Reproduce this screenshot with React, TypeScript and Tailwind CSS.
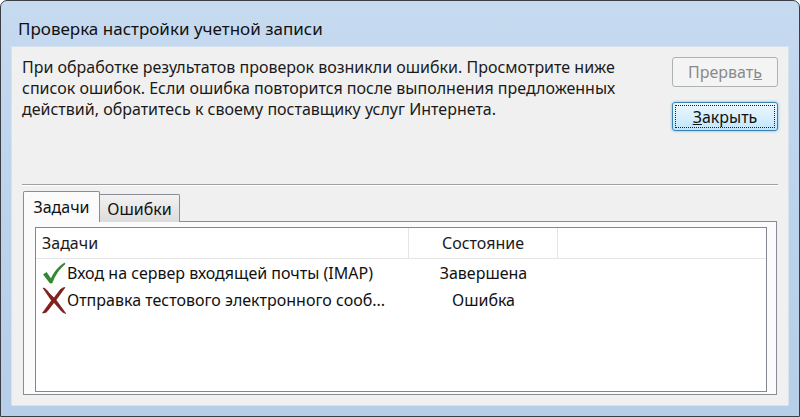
import React from 'react';

const font = { fontFamily: '"Noto Sans", "Open Sans", sans-serif' };

function CheckIcon() {
  return (
    <svg width="24" height="22" viewBox="0 0 24 22" className="shrink-0">
      <path d="M1.5 12.5 L4.5 10.5 L9 17 C12 10 16.5 4.5 22.5 1 L23 2 C17 7 13 13 10 21 L8 21 Z" fill="#2e8b2e" stroke="#1d6b1d" strokeWidth="0.6" />
    </svg>
  );
}

function CrossIcon() {
  return (
    <svg width="26" height="28" viewBox="0 0 26 28" className="shrink-0">
      <path d="M2 2 C4 2 6 4 8 7 L13 12 L19 4 C20.5 2.5 22 1.5 24 1.5 L15 14 L23 25 C23.5 26 24 27 25 27.5 C22.5 27 21 26 19.5 24 L13 16.5 L6 25.5 C5 26.5 3 27 1.5 27 L10.5 14.5 Z" fill="#8b1c1c" stroke="#5e0f0f" strokeWidth="0.6" />
    </svg>
  );
}

export default function App() {
  return (
    <div className="w-[800px] h-[417px] bg-white overflow-hidden" style={font}>
      <div className="w-full h-full flex flex-col rounded-t-[7px] border border-[#3b3f45] bg-gradient-to-b from-[#c6daf0] via-[#bcd3ec] to-[#b6cee8]">
        <div className="h-[45px] shrink-0 flex items-end pb-[5px] pl-[17px] text-[17px] text-[#111]">
          Проверка настройки учетной записи
        </div>
        <div className="mx-[10px] flex-1 border border-[#d6e2ee] bg-[#f0f0f0] flex flex-col">
          <div className="flex pl-[10px] pr-[10px] pt-[10px]">
            <p className="flex-1 text-[16px] leading-[21px] text-[#1a1a1a]">
              При обработке результатов проверок возникли ошибки. Просмотрите ниже список ошибок. Если ошибка повторится после выполнения предложенных действий, обратитесь к своему поставщику услуг Интернета.
            </p>
            <div className="w-[106px] ml-[30px] flex flex-col gap-[15px]">
              <button className="h-[30px] rounded-[3px] border border-[#adb2b5] bg-[#f4f4f4] text-[16px] text-[#8a8a8a]">
                Прерват<span className="underline">ь</span>
              </button>
              <button className="h-[29px] rounded-[3px] border border-[#3c7fb1] bg-gradient-to-b from-[#eaf6fd] via-[#d9f0fc] to-[#bee6fd] p-[2px] shadow-[0_0_3px_#69b7e6]">
                <div className="h-full border border-dotted border-[#222] flex items-center justify-center text-[16px] text-[#111]">
                  <span className="underline">З</span>акрыть
                </div>
              </button>
            </div>
          </div>
          <div className="mx-[10px] mt-[53px] h-[2px] border-t border-[#a0a0a0] border-b border-b-white" />
          <div className="flex-1 flex flex-col pl-[11px] pr-[11px] pt-[5px] pb-[10px]">
            <div className="flex items-end h-[31px] relative z-10">
              <div className="h-[31px] w-[77px] border border-b-0 border-[#898c95] bg-[#fbfbfb] flex items-center justify-center text-[16px] text-[#111] rounded-t-[2px]">
                Задачи
              </div>
              <div className="h-[28px] w-[80px] border border-l-0 border-b-0 border-[#898c95] bg-gradient-to-b from-[#f2f2f2] to-[#dcdcdc] flex items-center justify-center text-[16px] text-[#111] rounded-tr-[2px]">
                Ошибки
              </div>
            </div>
            <div className="-mt-px flex-1 border border-[#898c95] bg-[#fbfbfb] pl-[11px] pr-[9px] pt-[5px] pb-[2px] flex">
              <div className="flex-1 border border-[#828790] bg-white flex flex-col">
                <div className="flex h-[31px] border-b border-[#e5e5e5] text-[16px] text-[#1a1a1a]">
                  <div className="w-[373px] border-r border-[#e5e5e5] flex items-center pl-[6px]">Задачи</div>
                  <div className="w-[149px] border-r border-[#e5e5e5] flex items-center justify-center">Состояние</div>
                  <div className="flex-1" />
                </div>
                <div className="flex flex-col pt-[1px] text-[16px] text-[#111]">
                  <div className="flex h-[26px] items-center">
                    <div className="w-[373px] flex items-center pl-[6px] gap-[1px]">
                      <CheckIcon />
                      <span>Вход на сервер входящей почты (IMAP)</span>
                    </div>
                    <div className="w-[149px] text-center">Завершена</div>
                  </div>
                  <div className="flex h-[27px] items-center">
                    <div className="w-[373px] flex items-center pl-[5px] gap-[0px]">
                      <CrossIcon />
                      <span>Отправка тестового электронного сооб...</span>
                    </div>
                    <div className="w-[149px] text-center">Ошибка</div>
                  </div>
                </div>
              </div>
            </div>
          </div>
        </div>
        <div className="h-[10px] shrink-0" />
      </div>
    </div>
  );
}
